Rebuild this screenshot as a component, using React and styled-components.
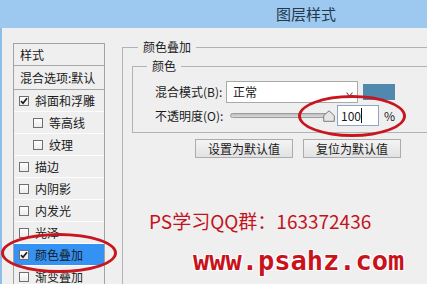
import React from 'react';
import styled, { createGlobalStyle } from 'styled-components';

const Global = createGlobalStyle`
  html, body { margin: 0; padding: 0; background: #efefef; overflow: hidden; }
  body {
    width: 427px; height: 284px;
    font-family: "Noto Sans CJK SC", "Microsoft YaHei", sans-serif;
    font-size: 12px; color: #1a1a1a;
  }
`;

const Window = styled.div`
  position: relative;
  width: 427px;
  height: 284px;
  overflow: hidden;
  background: #efefef;
  box-shadow: inset 2px 0 0 #8fbde9;
`;

const TitleBar = styled.div`
  height: 28px;
  background: #9dc8f0;
  display: flex;
  align-items: center;
  padding-left: 276px;
  font-size: 15px;
  line-height: 28px;
  color: #24384c;
`;

const Body = styled.div`
  display: flex;
  align-items: flex-start;
  padding: 11px 0 0 13px;
`;

const StyleList = styled.div`
  margin-top: 4px;
  width: 92px;
  box-sizing: border-box;
  border: 1px solid #a3a3a3;
  border-bottom: none;
  display: flex;
  flex-direction: column;
  flex-shrink: 0;
`;

const HeadRow = styled.div`
  height: ${(p) => p.$h}px;
  box-sizing: border-box;
  border-bottom: 1px solid #a8a8a8;
  display: flex;
  align-items: center;
  padding-left: 6px;
  line-height: 16px;
  white-space: nowrap;
`;

const ItemRow = styled.div`
  height: 22px;
  box-sizing: border-box;
  border-bottom: 1px solid #fcfcfc;
  display: flex;
  align-items: center;
  gap: 6px;
  padding-left: ${(p) => (p.$indent ? 19 : 5)}px;
  background: ${(p) => (p.$selected ? '#3392f4' : 'transparent')};
  line-height: 16px;
  white-space: nowrap;
`;

const Box = styled.span`
  width: 10px;
  height: 10px;
  box-sizing: border-box;
  border: 1px solid #707070;
  background: linear-gradient(#ffffff, #ececec);
  display: flex;
  align-items: center;
  justify-content: center;
  flex-shrink: 0;
`;

const Check = ({ checked }) => (
  <Box>
    {checked && (
      <svg width="8" height="8" viewBox="0 0 8 8">
        <path d="M1 4.2 L3 6.3 L7 1.2" fill="none" stroke="#1c1c1c" strokeWidth="1.7" />
      </svg>
    )}
  </Box>
);

const Right = styled.div`
  margin-left: 17px;
  width: 340px;
  flex-shrink: 0;
`;

const OuterSet = styled.fieldset`
  margin: 0;
  min-width: 0;
  height: 260px;
  box-sizing: border-box;
  border: 1px solid #b3b3b3;
  padding: 3px 0 0 9px;
`;

const Legend = styled.legend`
  padding: 0 5px;
  margin-left: ${(p) => p.$ml}px;
  line-height: 16px;
  font-size: 12px;
`;

const InnerSet = styled.fieldset`
  margin: 0;
  min-width: 0;
  border: 1px solid #b3b3b3;
  padding: 7px 0 6px 14px;
`;

const Row = styled.div`
  display: flex;
  align-items: center;
  height: ${(p) => p.$h}px;
  margin-top: ${(p) => p.$mt || 0}px;
  padding-left: 8px;
`;

const Label = styled.span`
  width: 71px;
  flex-shrink: 0;
  white-space: nowrap;
  line-height: 16px;
`;

const Select = styled.div`
  width: 132px;
  height: 22px;
  box-sizing: border-box;
  border: 1px solid #a9a9a9;
  background: #fff;
  display: flex;
  align-items: center;
  padding: 0 4px 0 6px;
  line-height: 16px;
`;

const Chevron = styled.svg`
  margin-left: auto;
  margin-top: 4px;
`;

const Swatch = styled.div`
  margin-left: 5px;
  width: 32px;
  height: 16px;
  background: #5088ae;
`;

const Slider = styled.div`
  width: 111px;
  display: flex;
  align-items: center;
  padding-left: 4px;
  box-sizing: border-box;
`;

const Track = styled.div`
  width: 100px;
  height: 5px;
  border-radius: 3px;
  box-sizing: border-box;
  border: 1px solid #9c9c9c;
  background: linear-gradient(#bdbdbd, #dcdcdc);
`;

const Thumb = styled.svg`
  margin-left: -7px;
  margin-top: 1px;
`;

const Input = styled.div`
  width: 42px;
  height: 21px;
  box-sizing: border-box;
  border: 1px solid #8fa7c2;
  background: #fff;
  display: flex;
  align-items: center;
  padding-left: 3px;
  line-height: 16px;
`;

const Caret = styled.span`
  width: 1px;
  height: 15px;
  background: #111;
  margin-left: 0px;
`;

const Percent = styled.span`
  margin-left: 5px;
  line-height: 16px;
`;

const ButtonRow = styled.div`
  display: flex;
  gap: 10px;
  margin-top: 6px;
  padding-left: 63px;
`;

const Button = styled.div`
  width: 98px;
  height: 19px;
  box-sizing: border-box;
  border: 1px solid #acacac;
  background: linear-gradient(#f4f4f4, #e2e2e2);
  display: flex;
  align-items: center;
  justify-content: center;
  line-height: 16px;
  white-space: nowrap;
`;

const QQ = styled.div`
  margin-top: 51px;
  padding-left: 17px;
  font-size: 19px;
  line-height: 24px;
  color: #c3141c;
  white-space: nowrap;
`;

const Site = styled.div`
  margin-top: 13px;
  padding-left: 61px;
  font-family: "DejaVu Sans Mono", "Liberation Mono", monospace;
  font-weight: bold;
  font-size: 27px;
  line-height: 30px;
  color: #c8121c;
  white-space: nowrap;
  text-shadow: 1px 0 0 #fff, -1px 0 0 #fff, 0 1px 0 #fff, 0 -1px 0 #fff,
    1px 1px 0 #fff, -1px -1px 0 #fff, 1px -1px 0 #fff, -1px 1px 0 #fff;
`;

const Ring = styled.div`
  position: absolute;
  left: ${(p) => p.$x}px;
  top: ${(p) => p.$y}px;
  width: ${(p) => p.$w}px;
  height: ${(p) => p.$h}px;
  box-sizing: border-box;
  border: 3px solid #c8161f;
  border-radius: 50%;
  pointer-events: none;
`;

const items = [
  { label: '斜面和浮雕', checked: true },
  { label: '等高线', indent: true },
  { label: '纹理', indent: true },
  { label: '描边' },
  { label: '内阴影' },
  { label: '内发光' },
  { label: '光泽' },
  { label: '颜色叠加', checked: true, selected: true },
  { label: '渐变叠加' },
];

export default function App() {
  return (
    <>
      <Global />
      <Window>
        <TitleBar>图层样式</TitleBar>
        <Body>
          <StyleList>
            <HeadRow $h={22}>样式</HeadRow>
            <HeadRow $h={24}>混合选项:默认</HeadRow>
            {items.map((it) => (
              <ItemRow key={it.label} $indent={it.indent} $selected={it.selected}>
                <Check checked={it.checked} />
                <span>{it.label}</span>
              </ItemRow>
            ))}
          </StyleList>
          <Right>
            <OuterSet>
              <Legend $ml={6}>颜色叠加</Legend>
              <InnerSet>
                <Legend $ml={0}>颜色</Legend>
                <Row $h={22}>
                  <Label>混合模式(B):</Label>
                  <Select>
                    <span>正常</span>
                    <Chevron width="7" height="5" viewBox="0 0 7 5">
                      <path d="M0.5 0.5 L3.5 4 L6.5 0.5" fill="none" stroke="#555" strokeWidth="1.1" />
                    </Chevron>
                  </Select>
                  <Swatch />
                </Row>
                <Row $h={21} $mt={2}>
                  <Label>不透明度(O):</Label>
                  <Slider>
                    <Track />
                    <Thumb width="12" height="12" viewBox="0 0 12 12">
                      <path d="M6 0.8 L11.3 5.6 L11.3 11.3 L0.7 11.3 L0.7 5.6 Z" fill="#e6e6e6" stroke="#7a7a7a" strokeWidth="1" />
                    </Thumb>
                  </Slider>
                  <Input>
                    <span>100</span>
                    <Caret />
                  </Input>
                  <Percent>%</Percent>
                </Row>
              </InnerSet>
              <ButtonRow>
                <Button>设置为默认值</Button>
                <Button>复位为默认值</Button>
              </ButtonRow>
              <QQ>PS学习QQ群：163372436</QQ>
              <Site>www.psahz.com</Site>
            </OuterSet>
          </Right>
        </Body>
        <Ring $x={1} $y={233} $w={116} $h={40} />
        <Ring $x={298} $y={95} $w={108} $h={42} />
      </Window>
    </>
  );
}
